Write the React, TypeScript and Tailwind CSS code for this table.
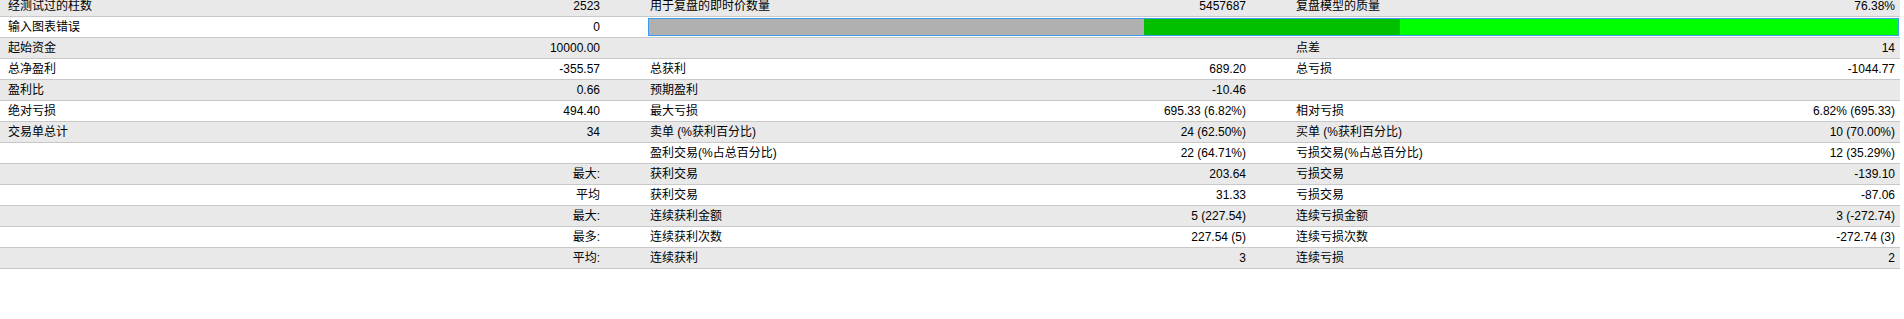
import React from "react";

type Row = [string, string, string, string, string, string];

const rows: Row[] = [
  ["经测试过的柱数", "2523", "用于复盘的即时价数量", "5457687", "复盘模型的质量", "76.38%"],
  ["输入图表错误", "0", "", "", "", ""],
  ["起始资金", "10000.00", "", "", "点差", "14"],
  ["总净盈利", "-355.57", "总获利", "689.20", "总亏损", "-1044.77"],
  ["盈利比", "0.66", "预期盈利", "-10.46", "", ""],
  ["绝对亏损", "494.40", "最大亏损", "695.33 (6.82%)", "相对亏损", "6.82% (695.33)"],
  ["交易单总计", "34", "卖单 (%获利百分比)", "24 (62.50%)", "买单 (%获利百分比)", "10 (70.00%)"],
  ["", "", "盈利交易(%占总百分比)", "22 (64.71%)", "亏损交易(%占总百分比)", "12 (35.29%)"],
  ["", "最大:", "获利交易", "203.64", "亏损交易", "-139.10"],
  ["", "平均", "获利交易", "31.33", "亏损交易", "-87.06"],
  ["", "最大:", "连续获利金额", "5 (227.54)", "连续亏损金额", "3 (-272.74)"],
  ["", "最多:", "连续获利次数", "227.54 (5)", "连续亏损次数", "-272.74 (3)"],
  ["", "平均:", "连续获利", "3", "连续亏损", "2"],
];

export default function App() {
  return (
    <div className="w-[1904px] h-[319px] bg-white overflow-hidden font-['Liberation_Sans','Noto_Sans_CJK_SC',sans-serif] text-[12px] text-black">
      <div className="-mt-[4px] w-[1900px]">
        {rows.map((r, i) => (
          <div
            key={i}
            className={`grid grid-cols-[300px_347px_300px_346px_300px_307px] h-[21px] border-b border-[#c8c8c8] leading-[20px] ${
              i % 2 === 0 ? "bg-[#e9e9e9]" : "bg-white"
            }`}
          >
            <div className="pl-[8px] whitespace-nowrap">{r[0]}</div>
            <div className="pr-[47px] text-right whitespace-nowrap">{r[1]}</div>
            {i === 1 ? (
              <div className="col-span-4 p-[1px] h-[20px]">
                <div className="flex h-[18px] border border-[#3d9bef]">
                  <div className="w-[495px] bg-[#b0b0b0]" />
                  <div className="w-[256px] bg-[#00c000]" />
                  <div className="flex-1 bg-[#00ff00]" />
                </div>
              </div>
            ) : (
              <>
                <div className="pl-[3px] whitespace-nowrap">{r[2]}</div>
                <div className="pr-[47px] text-right whitespace-nowrap">{r[3]}</div>
                <div className="pl-[3px] whitespace-nowrap">{r[4]}</div>
                <div className="pr-[5px] text-right whitespace-nowrap">{r[5]}</div>
              </>
            )}
          </div>
        ))}
      </div>
    </div>
  );
}
